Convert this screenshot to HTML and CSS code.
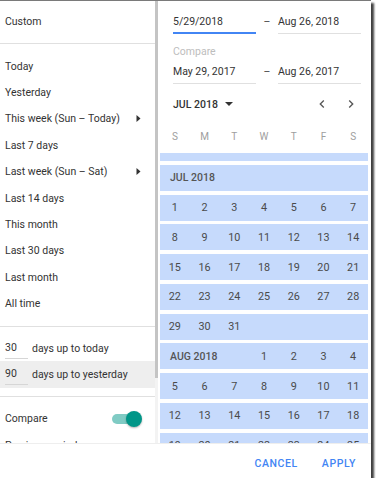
FILE: index.html
```html
<!DOCTYPE html>
<html>
<head>
<meta charset="utf-8">
<link rel="stylesheet" href="styles.css">
</head>
<body>
<div class="dialog">
  <div class="main">
    <div class="left">
      <div class="custom">Custom</div>
      <div class="presets">
        <div class="item">Today</div>
        <div class="item">Yesterday</div>
        <div class="item">This week (Sun – Today)<svg class="sub" width="5" height="7" viewBox="0 0 5 7"><polygon points="0.5,0 4.5,3.5 0.5,7" fill="#333"/></svg></div>
        <div class="item">Last 7 days</div>
        <div class="item">Last week (Sun – Sat)<svg class="sub" width="5" height="7" viewBox="0 0 5 7"><polygon points="0.5,0 4.5,3.5 0.5,7" fill="#333"/></svg></div>
        <div class="item">Last 14 days</div>
        <div class="item">This month</div>
        <div class="item">Last 30 days</div>
        <div class="item">Last month</div>
        <div class="item">All time</div>
      </div>
      <div class="rolling">
        <div class="roll"><span class="num">30</span><span>days up to today</span></div>
        <div class="roll active"><span class="num">90</span><span>days up to yesterday</span></div>
      </div>
      <div class="comparebox">
        <div class="item cmp"><span>Compare</span><span class="toggle"><span class="knob"></span></span></div>
        <div class="item">Previous period</div>
      </div>
    </div>
    <div class="sb"><div class="thumb"></div></div>
    <div class="right">
      <div class="dates first">
        <div class="field active">5/29/2018</div>
        <div class="dash">–</div>
        <div class="field">Aug 26, 2018</div>
      </div>
      <div class="cmp-label">Compare</div>
      <div class="dates second">
        <div class="field">May 29, 2017</div>
        <div class="dash">–</div>
        <div class="field">Aug 26, 2017</div>
      </div>
      <div class="monthnav">
        <span class="month">JUL 2018</span>
        <svg class="drop" width="8" height="4" viewBox="0 0 8 4"><polygon points="0,0 8,0 4,4" fill="#333"/></svg>
        <span class="spacer"></span>
        <svg class="chev" width="16" height="16" viewBox="0 0 24 24"><path d="M15.41 7.41L14 6l-6 6 6 6 1.41-1.41L10.83 12z" fill="#555"/></svg>
        <svg class="chev" width="16" height="16" viewBox="0 0 24 24"><path d="M10 6L8.59 7.41 13.17 12l-4.58 4.59L10 18l6-6z" fill="#555"/></svg>
      </div>
      <div class="weekdays">
        <span>S</span><span>M</span><span>T</span><span>W</span><span>T</span><span>F</span><span>S</span>
      </div>
      <div class="cal">
        <div class="row firstrow"></div>
        <div class="row"><span class="label wide">JUL 2018</span></div>
        <div class="row"><span>1</span><span>2</span><span>3</span><span>4</span><span>5</span><span>6</span><span>7</span></div>
        <div class="row"><span>8</span><span>9</span><span>10</span><span>11</span><span>12</span><span>13</span><span>14</span></div>
        <div class="row"><span>15</span><span>16</span><span>17</span><span>18</span><span>19</span><span>20</span><span>21</span></div>
        <div class="row"><span>22</span><span>23</span><span>24</span><span>25</span><span>26</span><span>27</span><span>28</span></div>
        <div class="row"><span>29</span><span>30</span><span>31</span></div>
        <div class="row"><span class="label">AUG 2018</span><span>1</span><span>2</span><span>3</span><span>4</span></div>
        <div class="row"><span>5</span><span>6</span><span>7</span><span>8</span><span>9</span><span>10</span><span>11</span></div>
        <div class="row"><span>12</span><span>13</span><span>14</span><span>15</span><span>16</span><span>17</span><span>18</span></div>
        <div class="row"><span>19</span><span>20</span><span>21</span><span>22</span><span>23</span><span>24</span><span>25</span></div>
      </div>
    </div>
  </div>
  <div class="footer">
    <button class="btn">CANCEL</button>
    <button class="btn">APPLY</button>
  </div>
</div>
</body>
</html>
```

FILE: styles.css
```css
html, body {
  margin: 0;
  padding: 0;
  background: #ffffff;
}
body {
  font-family: Roboto, "Liberation Sans", Arial, sans-serif;
  font-size: 10.5px;
  color: #333333;
}
.dialog {
  width: 371px;
  height: 478px;
  box-sizing: border-box;
  border-top: 1px solid #7a7a7a;
  background: #ffffff;
  box-shadow: 3px 3px 2px rgba(0, 0, 0, 0.75);
  display: flex;
  flex-direction: column;
}
.main {
  height: 443px;
  display: flex;
  overflow: hidden;
  border-bottom: 1px solid #eeeeee;
  box-sizing: border-box;
}
.left {
  width: 155px;
  flex: none;
  overflow: hidden;
}
.custom {
  height: 42px;
  line-height: 42px;
  padding-left: 5px;
  border-bottom: 1px solid #e0e0e0;
}
.presets {
  padding: 9px 0 9.3px;
  border-bottom: 1px solid #e0e0e0;
}
.item {
  height: 26.4px;
  display: flex;
  align-items: center;
  padding-left: 5px;
  white-space: nowrap;
}
.sub {
  margin-left: auto;
  margin-right: 14px;
}
.rolling {
  padding: 7.7px 0 8px;
  border-bottom: 1px solid #e0e0e0;
}
.roll {
  height: 26.4px;
  display: flex;
  align-items: center;
  padding-left: 5px;
  gap: 4px;
}
.roll.active {
  background: #eeeeee;
}
.num {
  display: inline-block;
  width: 23px;
  line-height: 14px;
  padding-top: 4px;
  padding-bottom: 3px;
  border-bottom: 1px solid #d6d6d6;
}
.comparebox {
  padding-top: 9px;
}
.cmp {
  justify-content: space-between;
  padding-right: 18px;
}
.toggle {
  width: 25px;
  height: 10px;
  border-radius: 5px;
  background: #80cbc4;
  display: flex;
  align-items: center;
  justify-content: flex-end;
}
.knob {
  width: 16px;
  height: 16px;
  border-radius: 50%;
  background: #009688;
  margin-right: -5px;
  box-shadow: 0 1px 2px rgba(0, 0, 0, 0.3);
  flex: none;
}
.sb {
  width: 3px;
  flex: none;
  background: #f3f3f3;
}
.thumb {
  height: 377px;
  background: #c4c4c4;
}
.right {
  flex: 1;
  min-width: 0;
  display: flex;
  flex-direction: column;
}
.dates {
  display: flex;
  align-items: flex-start;
  padding-left: 15px;
}
.dates.first {
  margin-top: 14px;
}
.dates.second {
  margin-top: 5.5px;
}
.field {
  width: 83px;
  line-height: 14px;
  padding-bottom: 4px;
  border-bottom: 1px solid #e0e0e0;
  white-space: nowrap;
}
.field.active {
  padding-bottom: 3px;
  border-bottom: 2px solid #4285f4;
}
.dash {
  width: 22px;
  text-align: center;
  line-height: 14px;
  color: #444444;
}
.cmp-label {
  margin-top: 11px;
  padding-left: 15px;
  line-height: 14px;
  color: #bdbdbd;
}
.monthnav {
  margin-top: 10.5px;
  height: 20px;
  display: flex;
  align-items: center;
  padding-left: 15px;
  padding-right: 12px;
}
.month {
  font-weight: 500;
  color: #333333;
}
.drop {
  margin-left: 7px;
}
.spacer {
  flex: 1;
}
.chev + .chev {
  margin-left: 13.5px;
}
.weekdays {
  margin-top: 15.5px;
  height: 14px;
  line-height: 14px;
  display: grid;
  grid-template-columns: repeat(7, 1fr);
  padding: 0 3px 0 2px;
  color: #9e9e9e;
  font-size: 10px;
  text-align: center;
}
.cal {
  margin-top: 9.5px;
  flex: 1;
  overflow: hidden;
  padding: 0 3px 0 2px;
}
.row {
  height: 26px;
  margin-bottom: 3.75px;
  background: #c6dafc;
  display: grid;
  grid-template-columns: repeat(7, 1fr);
  align-items: center;
  text-align: center;
  color: #4a4a4a;
  font-size: 10.8px;
}
.row.firstrow {
  margin-top: -18px;
}
.label {
  grid-column: span 3;
  text-align: left;
  padding-left: 10px;
  font-weight: 500;
  color: #555555;
  font-size: 10.5px;
}
.label.wide {
  grid-column: span 7;
}
.footer {
  flex: 1;
  display: flex;
  justify-content: flex-end;
  align-items: flex-start;
  gap: 24px;
  padding: 13px 15px 0 0;
}
.btn {
  background: none;
  border: none;
  padding: 0;
  margin: 0;
  font-family: Roboto, "Liberation Sans", Arial, sans-serif;
  font-size: 10.5px;
  font-weight: 500;
  line-height: 14px;
  letter-spacing: 0.6px;
  color: #4285f4;
}
```
